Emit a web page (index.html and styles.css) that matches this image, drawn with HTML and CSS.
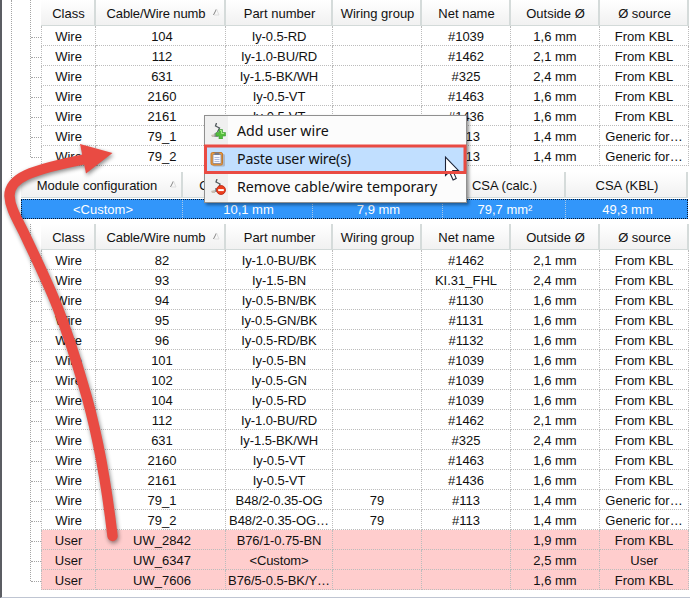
FILE: index.html
```html
<!DOCTYPE html>
<html lang="en">
<head>
<meta charset="utf-8">
<title>Module configuration</title>
<link rel="stylesheet" href="styles.css">
</head>
<body>
<main class="panel">
  <div class="trunk">
    <section class="band band-top">
      <div class="table" id="upper"></div>
    </section>
    <section class="modules">
      <div class="module-head">
        <div class="head first">Module configuration<svg class="sort" viewBox="0 0 7 8"><path d="M.5 7 3.5 1" stroke="#858585"/><path d="M3.5 1 6 7H1" stroke="#dedede"/></svg></div><div class="head">Outside Ø (calc.)</div><div class="head"></div><div class="head">CSA (calc.)</div><div class="head">CSA (KBL)</div>
      </div>
      <div class="module-row">
        <div class="first">&lt;Custom&gt;</div><div>10,1 mm</div><div>7,9 mm</div><div>79,7 mm²</div><div>49,3 mm</div>
      </div>
    </section>
    <section class="band band-bottom">
      <div class="table" id="lower"></div>
    </section>
  </div>
</main>

<div class="menu">
  <div class="item">
    <svg class="icon" viewBox="0 0 16 16"><path d="M6.5 0 5.5 3l4 2-2 4" fill="none" stroke="#50585c" stroke-width="1.3"/><path d="m1 12 4-1v3H2Z" fill="#c9beb2"/><path d="M4.5 10h4v4h-4Z" fill="#8d9299"/><path d="M9 6.5h3.5v3h3V13h-3v3H9v-3H6V9.500h3Z" fill="#55bd3d" stroke="#3c9a35" stroke-width=".6"/><path d="M10 7.500h1.500v3H14" fill="none" stroke="#a5ec88"/></svg>
    <span>Add user wire</span>
  </div>
  <div class="item active">
    <svg class="icon" viewBox="0 0 16 16"><rect x="3" y="3" width="12" height="12.5" rx="1.5" fill="#9b9da3" opacity=".6"/><rect x="1" y="1.5" width="11.5" height="12.5" rx="1.5" fill="#ed9b3d" stroke="#c47a2c"/><path d="M3 3.5h8v9H3Z" fill="#f6f8ff" stroke="#737990" stroke-width=".7"/><path d="M4.5 1.500h5v2.500h-5Z" fill="#737a8e"/><path d="M4.5 6.5h5m-5 2h5m-5 2h5" stroke="#9aaad4" stroke-width=".8"/></svg>
    <span class="tight">Paste user wire(s)</span>
  </div>
  <div class="item">
    <svg class="icon" viewBox="0 0 16 16"><path d="M7 0 6 3l4 2-1 3" fill="none" stroke="#50585c" stroke-width="1.3"/><path d="m1 12 4-1v3H2Z" fill="#c9beb2"/><path d="M5 9h3v4H5Z" fill="#8d9299"/><circle cx="11" cy="11" r="4.5" fill="#ec3f1d" stroke="#b52314" stroke-width=".8"/><path d="M8.200 10.100h5.600v2H8.200Z" fill="#fff"/></svg>
    <span>Remove cable/wire temporary</span>
  </div>
</div>

<svg class="overlay" viewBox="0 0 690 599">
  <path d="M445.5 157v18.5l4-3.6 3.6 8 3.1-1.5-3.4-7.8h5.8Z" fill="#fff" stroke="#1d2438" stroke-width="1.1"/>
  <path d="M204 144.500H466.500V174H204ZM207 147.500V171H463.500V147.500Z" fill="#e94b43" fill-rule="evenodd"/>
  <g class="arrow">
    <path d="M112.5 536C106 480 97 430 83 384C61 308 48 284 24 233C16 217 10 207 9.5 196C9 178 30 170 86 159" fill="none" stroke="#e94b43" stroke-width="10.4" stroke-linecap="round"/>
    <path d="M80 144 112.5 153 86 173.5Z" fill="#e94b43"/>
  </g>
</svg>
<script src="app.js"></script>
</body>
</html>
```
FILE: styles.css
```css
* { box-sizing: border-box; }
body {
  margin: 0;
  width: 690px;
  height: 599px;
  overflow: hidden;
  background: #fff;
  color: #111;
  font: 13px/20px "Liberation Sans", Arial, sans-serif;
}
.panel {
  height: 598px;
  padding-left: 9px;
  border-left: 2px solid #5b5d63;
  border-bottom: 1px solid #bfc5d2;
}
.trunk {
  display: flex;
  flex-direction: column;
  height: 591px;
  position: relative;
}
.trunk::before {
  content: "";
  position: absolute;
  top: 0;
  left: 0;
  height: 210px;
  border-left: 1px dotted #a5a5a5;
}
.band { position: relative; padding-left: 30px; }
.band::before {
  content: "";
  position: absolute;
  top: 0;
  bottom: 9px;
  left: 19px;
  border-left: 1px dotted #a5a5a5;
}
.table { width: 648px; }
.row, .heads {
  display: grid;
  grid-template-columns: 55px 130px 107px 89px 89px 89px 89px;
  text-align: center;
  white-space: nowrap;
}
.row { position: relative; height: 20px; line-height: 21px; }
.row::before {
  content: "";
  position: absolute;
  left: -10px;
  top: 11px;
  width: 10px;
  border-top: 1px dotted #a5a5a5;
}
.cell {
  height: 20px;
  border-right: 1px dotted #bcbcbc;
  border-bottom: 1px dotted #bcbcbc;
}
.cell:first-child { border-left: 1px dotted #bcbcbc; }
.cell:nth-child(2) { padding-left: 3px; }
.cell:nth-child(3) { letter-spacing: -0.1px; }
.row.user .cell { background: #ffcdcd; }
.head {
  position: relative;
  height: 26px;
  padding-left: 2px;
  line-height: 27px;
  text-align: center;
  white-space: nowrap;
  background: linear-gradient(#fff, #f1f1f1);
  border-right: 2px solid #d5dbda;
  border-bottom: 1px solid #d3dad9;
}
.heads .head:nth-child(2) { padding-right: 10px; letter-spacing: -0.1px; }
.module-head .first { padding-right: 10px; }
.sort {
  position: absolute;
  right: 4px;
  top: 8px;
  width: 7px;
  height: 8px;
  fill: none;
}
.modules { padding-left: 10px; margin: 6px 0 5px; }
.module-head, .module-row {
  display: grid;
  grid-template-columns: 162px 130px 130px 123px 122px;
  width: 667px;
  text-align: center;
}
.module-row {
  height: 20px;
  margin-top: 1px;
  background: #3296fa;
  color: #fff;
  border: 1px dotted #06172e;
  line-height: 19px;
  grid-template-columns: 161px 130px 130px 123px 121px;
}
.module-row div { border-right: 1px dotted #a9c9e8; padding-left: 2px; }
.module-row div:last-child { border-right: 0; }
.menu {
  position: absolute;
  left: 204px;
  top: 115px;
  width: 263px;
  height: 88px;
  padding: 1px;
  border: 1px solid #909090;
  background: linear-gradient(90deg, #f0f0f0 23px, #fcfcfc 23px);
  box-shadow: 2px 2px 3px #0006;
  font: 14.2px/28px "Noto Sans", "Open Sans", sans-serif;
}
.item { display: flex; align-items: center; height: 28px; padding-left: 4px; }
.item.active { background: #c1dfff; }
.tight { letter-spacing: -0.17px; }
.icon { width: 16px; height: 16px; margin-right: 11px; flex: none; }
.overlay {
  position: absolute;
  left: 0;
  top: 0;
  width: 690px;
  height: 599px;
  pointer-events: none;
}
.arrow { filter: drop-shadow(1px 2px 2px #0007); }
```
FILE: app.js
```js
const heads = ["Class", "Cable/Wire numb", "Part number", "Wiring group", "Net name", "Outside Ø", "Ø source"];
const K = "From KBL", G = "Generic  for…";
const tail = [
  ["Wire", "104", "Iy-0.5-RD", "", "#1039", "1,6 mm", K],
  ["Wire", "112", "Iy-1.0-BU/RD", "", "#1462", "2,1 mm", K],
  ["Wire", "631", "Iy-1.5-BK/WH", "", "#325", "2,4 mm", K],
  ["Wire", "2160", "Iy-0.5-VT", "", "#1463", "1,6 mm", K],
  ["Wire", "2161", "Iy-0.5-VT", "", "#1436", "1,6 mm", K],
  ["Wire", "79_1", "B48/2-0.35-OG", "79", "#113", "1,4 mm", G],
  ["Wire", "79_2", "B48/2-0.35-OG…", "79", "#113", "1,4 mm", G]
];
// The context menu covers these columns of the last two upper rows.
const upper = tail.map((r, i) => i < 5 ? r : [r[0], r[1], "", "", ...r.slice(4)]);
const lower = [
  ["Wire", "82", "Iy-1.0-BU/BK", "", "#1462", "2,1 mm", K],
  ["Wire", "93", "Iy-1.5-BN", "", "KI.31_FHL", "2,4 mm", K],
  ["Wire", "94", "Iy-0.5-BN/BK", "", "#1130", "1,6 mm", K],
  ["Wire", "95", "Iy-0.5-GN/BK", "", "#1131", "1,6 mm", K],
  ["Wire", "96", "Iy-0.5-RD/BK", "", "#1132", "1,6 mm", K],
  ["Wire", "101", "Iy-0.5-BN", "", "#1039", "1,6 mm", K],
  ["Wire", "102", "Iy-0.5-GN", "", "#1039", "1,6 mm", K],
  ...tail,
  ["User", "UW_2842", "B76/1-0.75-BN", "", "", "1,9 mm", K],
  ["User", "UW_6347", "<Custom>", "", "", "2,5 mm", "User"],
  ["User", "UW_7606", "B76/5-0.5-BK/Y…", "", "", "1,6 mm", K]
];
function add(parent, cls, text) {
  const el = document.createElement("div");
  el.className = cls;
  if (text) el.textContent = text;
  parent.appendChild(el);
  return el;
}
function build(id, rows) {
  const table = document.getElementById(id);
  const top = add(table, "heads");
  heads.forEach((h, i) => {
    const cell = add(top, "head", h);
    if (i === 1) cell.appendChild(document.querySelector(".sort").cloneNode(true));
  });
  rows.forEach(r => {
    const row = add(table, r[0] === "User" ? "row user" : "row");
    r.forEach(c => add(row, "cell", c));
  });
}
build("upper", upper);
build("lower", lower);
```
